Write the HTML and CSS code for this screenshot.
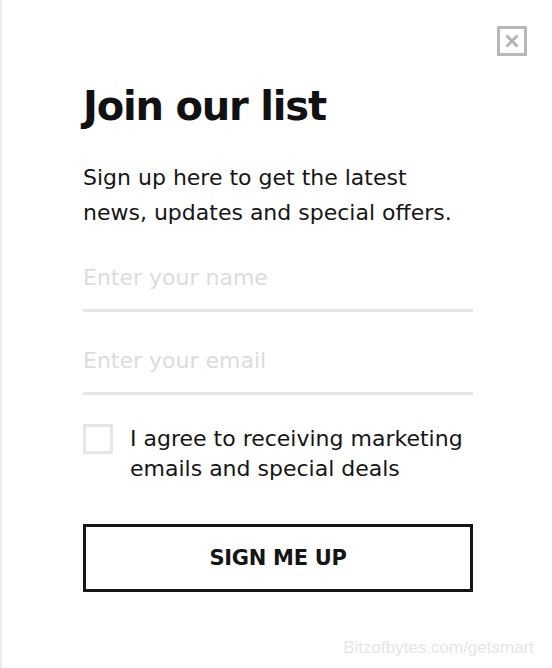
FILE: index.html
```html
<!DOCTYPE html>
<html lang="en">
<head>
<meta charset="utf-8">
<title>Join our list</title>
<link rel="stylesheet" href="styles.css">
</head>
<body>
<div class="page">
  <button class="close" aria-label="Close">
    <svg width="14" height="14" viewBox="0 0 14 14"><path d="M1.5 1.5L12.5 12.5M12.5 1.5L1.5 12.5" stroke="#b3b3b3" stroke-width="2.8" fill="none"/></svg>
  </button>
  <main class="panel">
    <h1 class="title">Join our list</h1>
    <p class="lead">Sign up here to get the latest news, updates and special offers.</p>
    <form class="form">
      <input class="field" type="text" placeholder="Enter your name">
      <input class="field field-email" type="email" placeholder="Enter your email">
      <label class="agree">
        <span class="box"></span>
        <span class="agree-text">I agree to receiving marketing emails and special deals</span>
      </label>
      <button type="button" class="submit">SIGN ME UP</button>
    </form>
  </main>
  <footer class="credit">Bitzofbytes.com/getsmart</footer>
</div>
</body>
</html>
```
FILE: styles.css
```css
html, body {
  margin: 0;
  padding: 0;
  background: #ffffff;
}
.page {
  position: relative;
  box-sizing: border-box;
  width: 552px;
  height: 668px;
  border-left: 2px solid #ececec;
  font-family: "DejaVu Sans", Verdana, sans-serif;
  color: #161616;
  display: flex;
  flex-direction: column;
}
.close {
  position: absolute;
  top: 26px;
  right: 25px;
  width: 30px;
  height: 30px;
  padding: 0;
  border: 3px solid #b8b8b8;
  background: #fff;
  display: flex;
  align-items: center;
  justify-content: center;
}
.panel {
  padding: 82px 0 0 81px;
  width: 390px;
}
.title {
  margin: 0;
  font-size: 40px;
  font-weight: 700;
  letter-spacing: -1.2px;
  line-height: 48px;
  color: #111;
}
.lead {
  margin: 30px 0 0;
  font-size: 22px;
  line-height: 35px;
}
.form {
  display: flex;
  flex-direction: column;
  margin-top: 32px;
}
.field {
  display: block;
  box-sizing: border-box;
  height: 50px;
  padding: 0 0 17px;
  border: none;
  border-bottom: 3px solid #e6e6e6;
  font-family: inherit;
  font-size: 22px;
  line-height: 30px;
  color: #161616;
  outline: none;
  background: transparent;
}
.field-email {
  margin-top: 33px;
}
.field::placeholder {
  color: #dcdcdc;
}
.agree {
  display: flex;
  gap: 17px;
  margin-top: 29px;
}
.box {
  flex: none;
  width: 30px;
  height: 30px;
  box-sizing: border-box;
  border: 3px solid #e6e6e6;
}
.agree-text {
  font-size: 22px;
  line-height: 30px;
}
.submit {
  margin-top: 40px;
  height: 68px;
  border: 3px solid #151515;
  background: #fff;
  font-family: inherit;
  font-size: 21px;
  font-weight: 700;
  letter-spacing: -0.3px;
  color: #151515;
}
.credit {
  position: absolute;
  right: 18px;
  bottom: 10px;
  font-family: "Liberation Sans", Arial, sans-serif;
  font-size: 17px;
  color: #e6e6e6;
}
```
